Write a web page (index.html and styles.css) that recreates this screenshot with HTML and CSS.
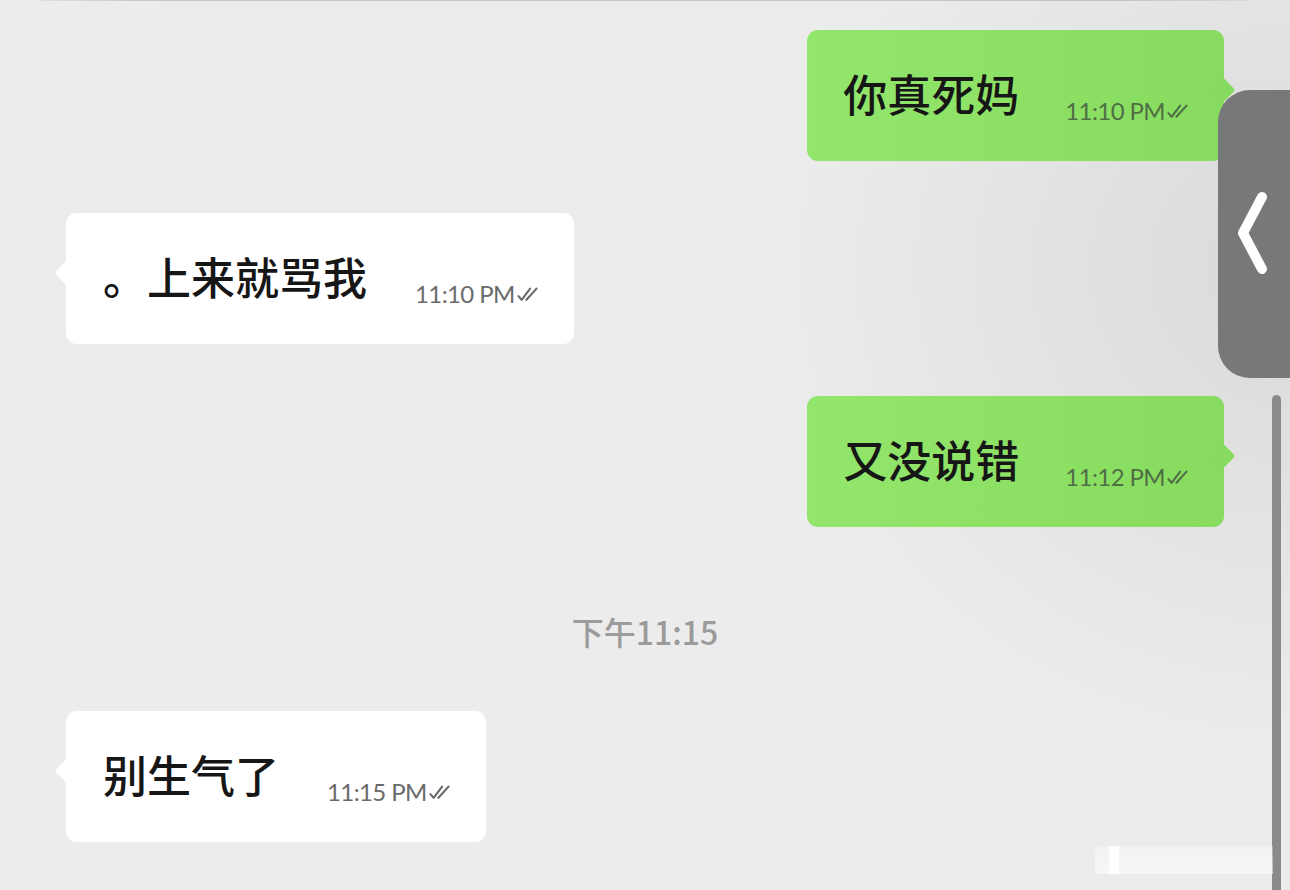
FILE: index.html
```html
<!DOCTYPE html>
<html lang="zh">
<head>
<meta charset="utf-8">
<link rel="stylesheet" href="styles.css">
</head>
<body>
<div class="screen">
  <div class="topline"></div>
  <div class="chat">
    <div class="row out first">
      <div class="bubble green">
        <span class="msg">你真死妈</span>
        <span class="meta"><span class="time">11:10 PM</span><svg class="ticks" viewBox="0 0 22 16" width="24" height="17"><path d="M2 9.5 L5 13 L13 2.5 M9.5 13 L19 2.5" fill="none" stroke="currentColor" stroke-width="2" stroke-linecap="round" stroke-linejoin="round"/></svg></span>
      </div>
    </div>
    <div class="row in">
      <div class="bubble white">
        <span class="msg">。上来就骂我</span>
        <span class="meta"><span class="time">11:10 PM</span><svg class="ticks" viewBox="0 0 22 16" width="24" height="17"><path d="M2 9.5 L5 13 L13 2.5 M9.5 13 L19 2.5" fill="none" stroke="currentColor" stroke-width="2" stroke-linecap="round" stroke-linejoin="round"/></svg></span>
      </div>
    </div>
    <div class="row out">
      <div class="bubble green">
        <span class="msg">又没说错</span>
        <span class="meta"><span class="time">11:12 PM</span><svg class="ticks" viewBox="0 0 22 16" width="24" height="17"><path d="M2 9.5 L5 13 L13 2.5 M9.5 13 L19 2.5" fill="none" stroke="currentColor" stroke-width="2" stroke-linecap="round" stroke-linejoin="round"/></svg></span>
      </div>
    </div>
    <div class="stamp">下午11:15</div>
    <div class="row in last">
      <div class="bubble white">
        <span class="msg">别生气了</span>
        <span class="meta"><span class="time">11:15 PM</span><svg class="ticks" viewBox="0 0 22 16" width="24" height="17"><path d="M2 9.5 L5 13 L13 2.5 M9.5 13 L19 2.5" fill="none" stroke="currentColor" stroke-width="2" stroke-linecap="round" stroke-linejoin="round"/></svg></span>
      </div>
    </div>
  </div>
  <div class="sidetab">
    <svg viewBox="0 0 44 90" width="44" height="90"><path d="M38 8 L19 44 L38 80" fill="none" stroke="#fff" stroke-width="10" stroke-linecap="round" stroke-linejoin="round"/></svg>
  </div>
  <div class="scrollbar"></div>
  <div class="watermark"><span class="wm-bright"></span></div>
</div>
</body>
</html>
```

FILE: styles.css
```css
* { box-sizing: border-box; }
html, body { margin: 0; padding: 0; }
body {
  width: 1290px;
  height: 890px;
  overflow: hidden;
  font-family: "Noto Sans CJK SC", "Noto Sans", sans-serif;
}
.screen {
  position: relative;
  width: 1290px;
  height: 890px;
  background:
    radial-gradient(ellipse 520px 480px at 1300px 270px, #d9d9d9 0%, rgba(217,217,217,0) 100%),
    #ececec;
}
.topline {
  height: 1px;
  margin: 0 40px;
  background: linear-gradient(90deg, rgba(190,190,190,0.3), #c4c4c4 10%, #c4c4c4 90%, rgba(190,190,190,0.3));
}
.chat {
  display: flex;
  flex-direction: column;
  padding: 0 66px;
}
.row { display: flex; margin-top: 52px; }
.row.first { margin-top: 29px; }
.row.out { justify-content: flex-end; }
.row.in { justify-content: flex-start; }
.bubble {
  position: relative;
  display: flex;
  align-items: center;
  height: 131px;
  padding: 0 34px 0 36px;
  border-radius: 11px;
}
.bubble.green { background: linear-gradient(90deg, #92e66b, #87dc5f); }
.bubble.white { background: #ffffff; padding-left: 37px; }
.bubble::after {
  content: "";
  position: absolute;
  top: 49px;
  width: 22px;
  height: 22px;
  border-radius: 3px;
  transform: rotate(45deg);
}
.bubble.green::after { right: -7px; background: #87dc5f; }
.bubble.white::after { left: -7px; background: #ffffff; }
.msg {
  position: relative;
  z-index: 1;
  font-size: 44px;
  font-weight: 500;
  line-height: 1;
  color: #161616;
  margin-top: -6px;
}
.meta {
  display: flex;
  align-items: center;
  margin-left: 48px;
  margin-top: 30px;
  font-family: Lato, "Liberation Sans", sans-serif;
  font-size: 24px;
  letter-spacing: -0.6px;
  line-height: 1;
}
.green .meta { color: #4f6e45; margin-left: 46px; }
.white .meta { color: #6a6a6a; }
.ticks { margin-left: 1px; margin-top: 2px; }
.stamp {
  align-self: center;
  margin-top: 84px;
  margin-bottom: 60px;
  height: 40px;
  line-height: 40px;
  font-family: "Noto Sans CJK SC", sans-serif;
  font-size: 32px;
  font-weight: 500;
  color: #9b9b9b;
}
.row.last { margin-top: 0; }
.sidetab {
  position: absolute;
  left: 1218px;
  top: 90px;
  width: 72px;
  height: 288px;
  background: #787878;
  border-radius: 32px 0 0 32px;
  display: flex;
  align-items: center;
  padding-left: 6px;
}
.scrollbar {
  position: absolute;
  left: 1272px;
  top: 395px;
  width: 9px;
  height: 495px;
  background: #8a8a8a;
  border-radius: 5px 5px 0 0;
}
.watermark {
  position: absolute;
  left: 1095px;
  top: 846px;
  width: 178px;
  height: 28px;
  background: linear-gradient(180deg, rgba(255,255,255,0.25), rgba(255,255,255,0.6));
}
.wm-bright {
  position: absolute;
  left: 14px;
  top: 0;
  width: 10px;
  height: 28px;
  background: rgba(255,255,255,0.9);
}
```
